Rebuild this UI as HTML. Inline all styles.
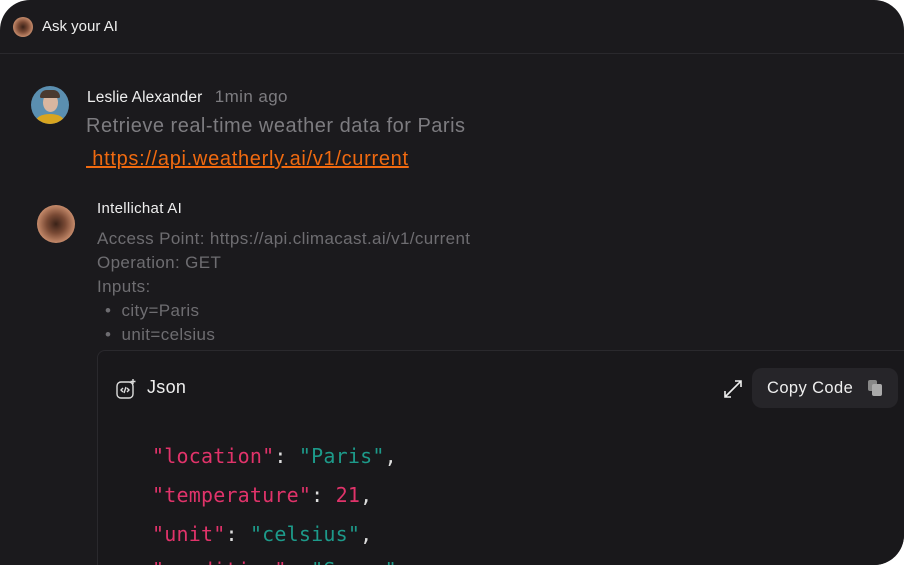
<!DOCTYPE html>
<html><head><style>
html,body{margin:0;padding:0;background:#fff;width:904px;height:565px;overflow:hidden}
.app{position:absolute;left:0;top:0;width:904px;height:565px;background:#1b1a1d;border-radius:30px 30px 30px 0;overflow:hidden;font-family:"Liberation Sans",sans-serif;color:#fff}
.hdr{position:absolute;left:0;top:0;right:0;height:53px;border-bottom:1px solid #2a292d}
.av{position:absolute;border-radius:50%;background:radial-gradient(circle at 50% 50%,#3a2218 0,#7a4a35 35%,#c58a6a 70%,#8a5a45 100%)}
.t{position:absolute;white-space:nowrap}
.code{position:absolute;left:97px;top:350px;width:820px;height:230px;background:#19181b;border:1px solid #2a292d;border-radius:8px}
.mono{font-family:"DejaVu Sans Mono","Liberation Mono",monospace;font-size:20px;position:absolute;left:152px;white-space:pre;letter-spacing:0.2px}
.k{color:#e0336a}.s{color:#1d9a8a}.p{color:#ddd}
</style></head><body>
<div class="app">
<div class="hdr"></div>
<div class="av" style="left:13px;top:17px;width:20px;height:20px"></div>
<div class="t" style="left:42px;top:18px;font-size:15px;color:#eee">Ask your AI</div>

<div style="position:absolute;left:31px;top:86px;width:38px;height:38px;border-radius:50%;background:#5b8fb0;overflow:hidden">
<div style="position:absolute;left:12px;top:7px;width:15px;height:19px;border-radius:50%;background:#d9b6a0"></div>
<div style="position:absolute;left:9px;top:4px;width:20px;height:8px;border-radius:10px 10px 2px 2px;background:#4a3a30"></div>
<div style="position:absolute;left:5px;top:28px;width:28px;height:14px;border-radius:50%;background:#d8a520"></div>
</div>
<div class="t" style="left:87px;top:87px;font-size:15.5px;color:#eee;letter-spacing:0.1px">Leslie Alexander <span style="color:#7d7c80;margin-left:8px;font-size:17px;letter-spacing:0.4px">1min ago</span></div>
<div class="t" style="left:86px;top:115px;font-size:20px;color:#7d7c80;letter-spacing:0.5px">Retrieve real-time weather data for Paris</div>
<div class="t" style="left:86px;top:148px;font-size:20px;color:#f06a10;text-decoration:underline;letter-spacing:0.7px">&nbsp;https://api.weatherly.ai/v1/current</div>

<div class="av" style="left:37px;top:205px;width:38px;height:38px"></div>
<div class="t" style="left:97px;top:200px;font-size:15px;color:#eee;letter-spacing:0.3px">Intellichat AI</div>
<div style="position:absolute;left:97px;top:227px;font-size:17px;color:#6e6d71;line-height:24px;letter-spacing:0.37px;white-space:nowrap">
Access Point: https://api.climacast.ai/v1/current<br>Operation: GET<br>Inputs:<br>
<span style="margin-left:8px">•&nbsp;&nbsp;city=Paris</span><br><span style="margin-left:8px">•&nbsp;&nbsp;unit=celsius</span></div>

<div class="code"></div>
<svg style="position:absolute;left:116px;top:378px" width="22" height="22" viewBox="0 0 22 22" fill="none" stroke="#ddd" stroke-width="1.4"><rect x="1" y="4" width="16" height="16" rx="4"/><path d="M7 10l-2 2 2 2M11 10l2 2-2 2M10 9l-2 6"/><path d="M17 1v5M14.5 3.5h5"/></svg>
<div class="t" style="left:147px;top:377px;font-size:18px;color:#eee;letter-spacing:0.3px">Json</div>
<svg style="position:absolute;left:722px;top:378px" width="22" height="22" viewBox="0 0 22 22" fill="none" stroke="#eee" stroke-width="1.6"><path d="M3 19L19 3M13 3h6v6M3 13v6h6"/></svg>
<div style="position:absolute;left:752px;top:368px;width:146px;height:40px;border-radius:10px;background:#262529"></div>
<div class="t" style="left:767px;top:379px;font-size:16.5px;color:#eee;letter-spacing:0.4px">Copy Code</div>
<div style="position:absolute;left:868px;top:380px;width:9px;height:11px;background:#888;border-radius:2px"></div>
<div style="position:absolute;left:872px;top:384px;width:10px;height:12px;background:#aaa;border-radius:2px"></div>

<div class="mono" style="top:444px"><span class="k">"location"</span><span class="p">: </span><span class="s">"Paris"</span><span class="p">,</span></div>
<div class="mono" style="top:483px"><span class="k">"temperature"</span><span class="p">: </span><span class="k">21</span><span class="p">,</span></div>
<div class="mono" style="top:522px"><span class="k">"unit"</span><span class="p">: </span><span class="s">"celsius"</span><span class="p">,</span></div>
<div class="mono" style="top:558px"><span class="k">"condition"</span><span class="p">: </span><span class="s">"Sunny"</span></div>
</div>
</body></html>
